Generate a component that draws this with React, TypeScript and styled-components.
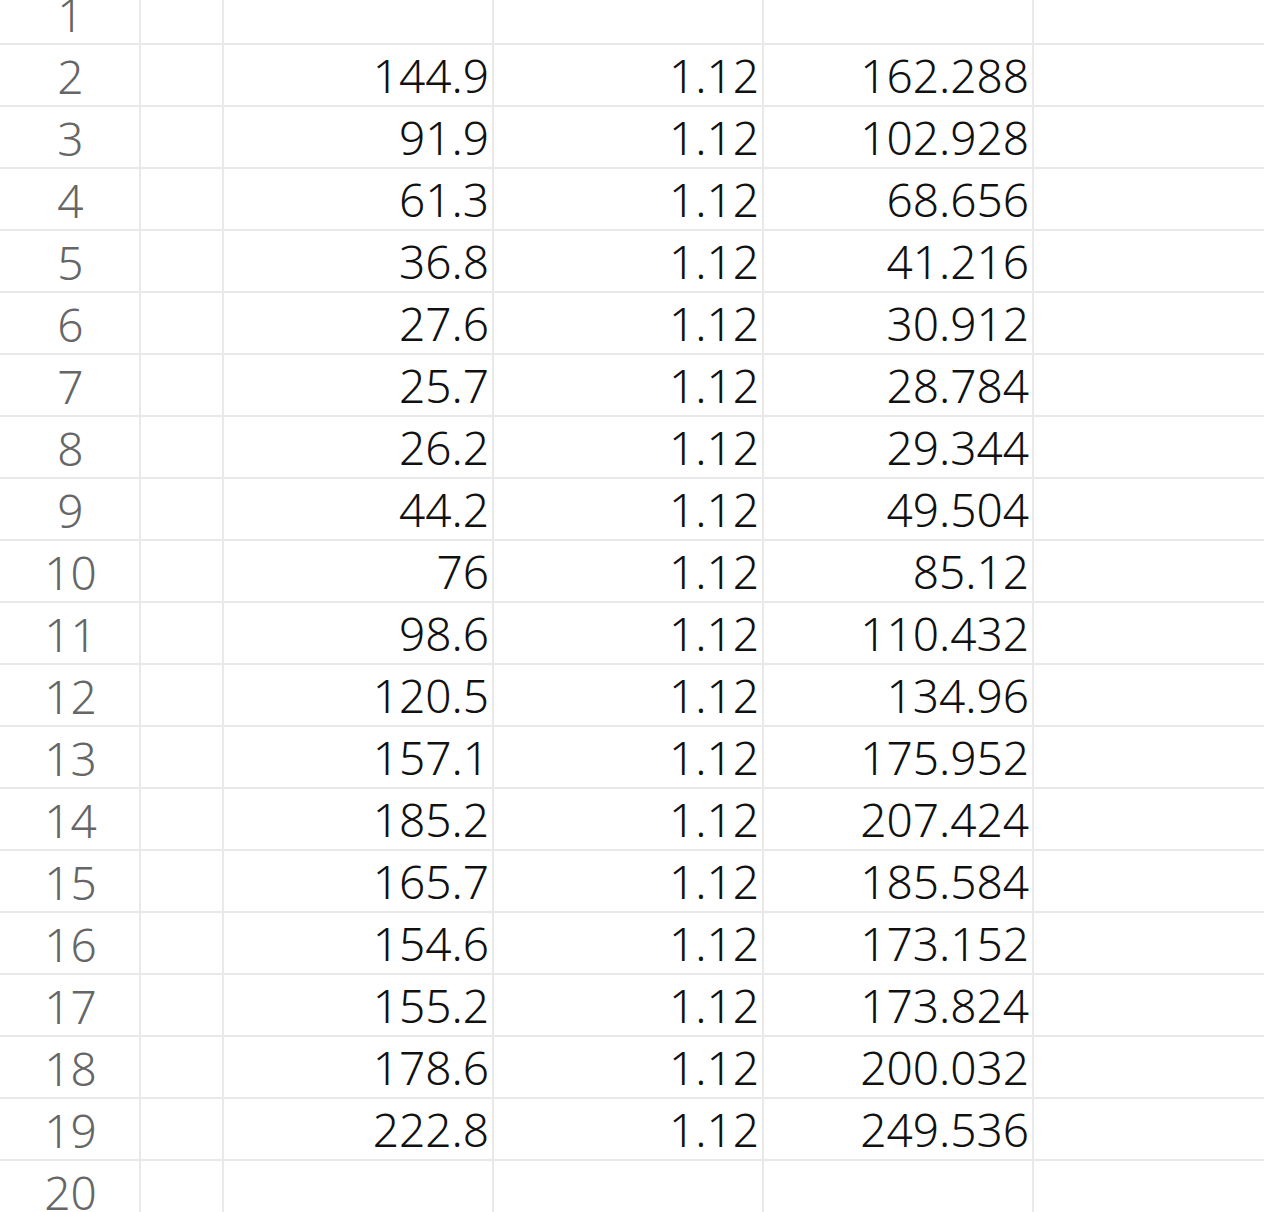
import React from "react";
import styled, { createGlobalStyle } from "styled-components";

const GlobalStyle = createGlobalStyle`
  html, body { margin: 0; padding: 0; background: #ffffff; }
  body { overflow: hidden; }
`;

const Viewport = styled.div`
  width: 1264px;
  height: 1212px;
  overflow: hidden;
  background: #ffffff;
`;

const Sheet = styled.div`
  margin-top: -17px;
  display: grid;
  grid-template-columns: 139px 81px 268px 268px 268px 1fr;
  grid-auto-rows: 60px;
  gap: 2px;
  background: #e9e9e9;
`;

const HeaderCell = styled.div`
  background: #ffffff;
  display: flex;
  align-items: center;
  justify-content: center;
  padding-left: 2px;
  padding-top: 1px;
  font-family: "Noto Sans", "DejaVu Sans", sans-serif;
  font-weight: 350;
  font-size: 46px;
  color: #666666;
`;

const Cell = styled.div<{ $num?: boolean }>`
  background: #ffffff;
  display: flex;
  align-items: center;
  justify-content: ${(p) => (p.$num ? "flex-end" : "flex-start")};
  padding-right: 3px;
  font-family: "Noto Sans", "DejaVu Sans", sans-serif;
  font-weight: 350;
  font-size: 46px;
  color: #111111;
  white-space: nowrap;
`;

const data: [string, string, string][] = [
  ["144.9", "1.12", "162.288"],
  ["91.9", "1.12", "102.928"],
  ["61.3", "1.12", "68.656"],
  ["36.8", "1.12", "41.216"],
  ["27.6", "1.12", "30.912"],
  ["25.7", "1.12", "28.784"],
  ["26.2", "1.12", "29.344"],
  ["44.2", "1.12", "49.504"],
  ["76", "1.12", "85.12"],
  ["98.6", "1.12", "110.432"],
  ["120.5", "1.12", "134.96"],
  ["157.1", "1.12", "175.952"],
  ["185.2", "1.12", "207.424"],
  ["165.7", "1.12", "185.584"],
  ["154.6", "1.12", "173.152"],
  ["155.2", "1.12", "173.824"],
  ["178.6", "1.12", "200.032"],
  ["222.8", "1.12", "249.536"],
];

type Row = [string, string, string] | null;

const rows: Row[] = [null, ...data, null];

export default function App() {
  return (
    <>
      <GlobalStyle />
      <Viewport>
        <Sheet>
          {rows.map((r, i) => (
            <React.Fragment key={i}>
              <HeaderCell>{i + 1}</HeaderCell>
              <Cell />
              <Cell $num>{r ? r[0] : ""}</Cell>
              <Cell $num>{r ? r[1] : ""}</Cell>
              <Cell $num>{r ? r[2] : ""}</Cell>
              <Cell />
            </React.Fragment>
          ))}
        </Sheet>
      </Viewport>
    </>
  );
}
